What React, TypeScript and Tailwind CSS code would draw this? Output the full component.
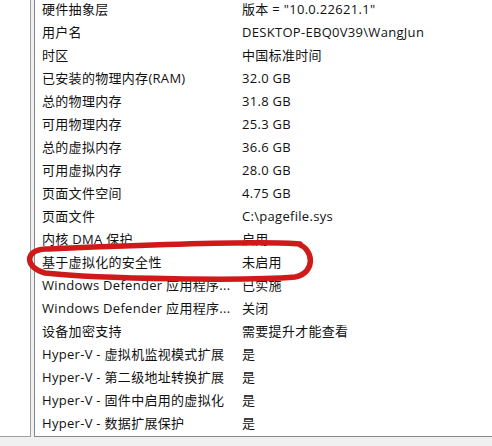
import React from 'react';

const ROWS: [string, string][] = [
  ['硬件抽象层', '版本 = "10.0.22621.1"'],
  ['用户名', 'DESKTOP-EBQ0V39\\WangJun'],
  ['时区', '中国标准时间'],
  ['已安装的物理内存(RAM)', '32.0 GB'],
  ['总的物理内存', '31.8 GB'],
  ['可用物理内存', '25.3 GB'],
  ['总的虚拟内存', '36.6 GB'],
  ['可用虚拟内存', '28.0 GB'],
  ['页面文件空间', '4.75 GB'],
  ['页面文件', 'C:\\pagefile.sys'],
  ['内核 DMA 保护', '启用'],
  ['基于虚拟化的安全性', '未启用'],
  ['Windows Defender 应用程序...', '已实施'],
  ['Windows Defender 应用程序...', '关闭'],
  ['设备加密支持', '需要提升才能查看'],
  ['Hyper-V - 虚拟机监视模式扩展', '是'],
  ['Hyper-V - 第二级地址转换扩展', '是'],
  ['Hyper-V - 固件中启用的虚拟化', '是'],
  ['Hyper-V - 数据扩展保护', '是'],
];

export default function App() {
  return (
    <div
      className="relative w-[492px] h-[446px] bg-[#f0f0f0] flex overflow-hidden text-[13px] tracking-[0.3px] text-[#111]"
      style={{ fontFamily: '"Open Sans", "Noto Sans CJK SC", sans-serif' }}
    >
      {/* left tree pane (scrolled off) */}
      <div className="w-[31px] h-[437px] bg-white border-r border-b border-[#a0a0a0]" />
      <div className="w-[3px]" />

      {/* item list */}
      <div className="flex-1 h-[437px] bg-white border-l border-b border-[#828790] overflow-hidden">
        <div className="-mt-[2px] pl-[7px]">
          {ROWS.map(([name, value], i) => (
            <div key={i} className="flex items-center h-[23px] whitespace-nowrap">
              <span className="w-[200px] shrink-0">{name}</span>
              <span>{value}</span>
            </div>
          ))}
        </div>
      </div>

      {/* red marker circle */}
      <svg className="absolute inset-0 pointer-events-none" width="492" height="446">
        <path
          d="M300 244 C260 240 120 246 45 249 C24 250 25 268 45 273 C100 279 250 281 295 277 C316 273 314 249 298 244"
          fill="none"
          stroke="#d01a1a"
          strokeWidth="5.5"
          strokeLinecap="round"
        />
      </svg>
    </div>
  );
}
